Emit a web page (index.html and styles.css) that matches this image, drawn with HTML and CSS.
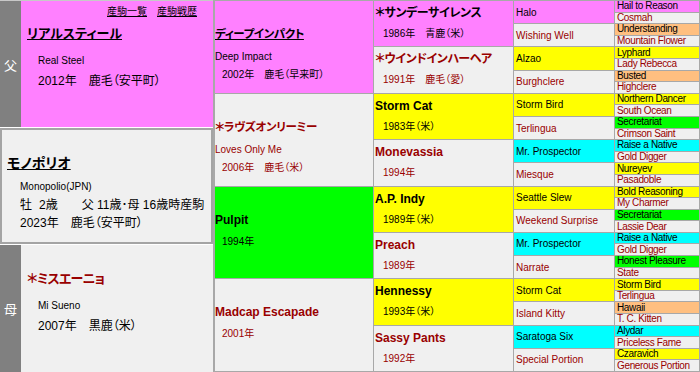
FILE: index.html
```html
<!DOCTYPE html>
<html lang="ja">
<head>
<meta charset="utf-8">
<title>モノポリオ 血統表</title>
<link rel="stylesheet" href="styles.css">
</head>
<body>
<div class="page">
  <div class="left">
    <div class="parent sire">
      <div class="side">父</div>
      <div class="pbody pink">
        <div class="links"><a href="#">産駒一覧</a><a href="#">産駒戦歴</a></div>
        <div class="pname"><a href="#">リアルスティール</a></div>
        <div class="pen">Real Steel</div>
        <div class="pinfo">2012年　鹿毛（安平町）</div>
      </div>
    </div>
    <div class="self">
      <div class="sname">モノポリオ</div>
      <div class="sen">Monopolio(JPN)</div>
      <div class="sline"><span>牡</span><span class="gap1">2歳</span><span class="gap2">父 11歳･母 16歳時産駒</span></div>
      <div class="sline2">2023年　鹿毛（安平町）</div>
    </div>
    <div class="parent dam">
      <div class="side">母</div>
      <div class="pbody">
        <div class="pname fem">＊ミスエーニョ</div>
        <div class="pen">Mi Sueno</div>
        <div class="pinfo">2007年　黒鹿（米）</div>
      </div>
    </div>
  </div>

  <div class="ped">
    <div class="c g1 pink"><div class="n1 jp"><a href="#">ディープインパクト</a></div><div class="e1">Deep Impact</div><div class="y1">2002年　鹿毛（早来町）</div></div>
    <div class="c g1 f"><div class="n1 jp">＊ラヴズオンリーミー</div><div class="e1">Loves Only Me</div><div class="y1">2006年　鹿毛（米）</div></div>
    <div class="c g1 green"><div class="n1">Pulpit</div><div class="y1 ny">1994年</div></div>
    <div class="c g1 f"><div class="n1">Madcap Escapade</div><div class="y1 ny">2001年</div></div>

    <div class="c g2 pink"><div class="n2 jp">＊サンデーサイレンス</div><div class="y2">1986年　青鹿（米）</div></div>
    <div class="c g2 f"><div class="n2 jp">＊ウインドインハーヘア</div><div class="y2">1991年　鹿毛（愛）</div></div>
    <div class="c g2 yellow"><div class="n2">Storm Cat</div><div class="y2">1983年（米）</div></div>
    <div class="c g2 f"><div class="n2">Monevassia</div><div class="y2">1994年</div></div>
    <div class="c g2 yellow"><div class="n2">A.P. Indy</div><div class="y2">1989年（米）</div></div>
    <div class="c g2 f"><div class="n2">Preach</div><div class="y2">1989年</div></div>
    <div class="c g2 yellow"><div class="n2">Hennessy</div><div class="y2">1993年（米）</div></div>
    <div class="c g2 f"><div class="n2">Sassy Pants</div><div class="y2">1992年</div></div>

    <div class="c g3 pink">Halo</div>
    <div class="c g3 f">Wishing Well</div>
    <div class="c g3 yellow">Alzao</div>
    <div class="c g3 f">Burghclere</div>
    <div class="c g3 yellow">Storm Bird</div>
    <div class="c g3 f">Terlingua</div>
    <div class="c g3 cyan">Mr. Prospector</div>
    <div class="c g3 f">Miesque</div>
    <div class="c g3 yellow">Seattle Slew</div>
    <div class="c g3 f">Weekend Surprise</div>
    <div class="c g3 cyan">Mr. Prospector</div>
    <div class="c g3 f">Narrate</div>
    <div class="c g3 yellow">Storm Cat</div>
    <div class="c g3 f">Island Kitty</div>
    <div class="c g3 cyan">Saratoga Six</div>
    <div class="c g3 f">Special Portion</div>

    <div class="c g4 pink">Hail to Reason</div>
    <div class="c g4 f">Cosmah</div>
    <div class="c g4 orange">Understanding</div>
    <div class="c g4 f">Mountain Flower</div>
    <div class="c g4 yellow">Lyphard</div>
    <div class="c g4 f">Lady Rebecca</div>
    <div class="c g4 orange">Busted</div>
    <div class="c g4 f">Highclere</div>
    <div class="c g4 yellow">Northern Dancer</div>
    <div class="c g4 f">South Ocean</div>
    <div class="c g4 green">Secretariat</div>
    <div class="c g4 f">Crimson Saint</div>
    <div class="c g4 cyan">Raise a Native</div>
    <div class="c g4 f">Gold Digger</div>
    <div class="c g4 yellow">Nureyev</div>
    <div class="c g4 f">Pasadoble</div>
    <div class="c g4 yellow">Bold Reasoning</div>
    <div class="c g4 f">My Charmer</div>
    <div class="c g4 green">Secretariat</div>
    <div class="c g4 f">Lassie Dear</div>
    <div class="c g4 cyan">Raise a Native</div>
    <div class="c g4 f">Gold Digger</div>
    <div class="c g4 green">Honest Pleasure</div>
    <div class="c g4 f">State</div>
    <div class="c g4 yellow">Storm Bird</div>
    <div class="c g4 f">Terlingua</div>
    <div class="c g4 orange">Hawaii</div>
    <div class="c g4 f">T. C. Kitten</div>
    <div class="c g4 cyan">Alydar</div>
    <div class="c g4 f">Priceless Fame</div>
    <div class="c g4 yellow">Czaravich</div>
    <div class="c g4 f">Generous Portion</div>
  </div>
</div>
</body>
</html>
```

FILE: styles.css
```css
html, body {
  margin: 0;
  padding: 0;
  background: #ffffff;
}
body {
  font-family: "Liberation Sans", "Noto Sans CJK JP", sans-serif;
  font-feature-settings: "palt";
  color: #000;
}
a {
  color: #000;
  text-decoration: underline;
}
.page {
  display: flex;
  width: 700px;
  height: 372px;
  overflow: hidden;
}

/* ---------- left column ---------- */
.left {
  width: 213px;
  flex: none;
  display: flex;
  flex-direction: column;
  gap: 1px;
}
.parent {
  display: flex;
  height: 127px;
  flex: none;
}
.sire {
  border-top: 1px solid #c8c8c8;
  box-sizing: border-box;
}
.side {
  width: 21px;
  flex: none;
  background: #808080;
  color: #fff;
  font-size: 13px;
  display: flex;
  align-items: center;
  justify-content: center;
}
.pbody {
  flex: 1;
  background: #f0f0f0;
}
.links {
  margin-top: 5px;
  display: flex;
  justify-content: flex-end;
  gap: 10px;
  padding-right: 16px;
  font-size: 10px;
  line-height: 12px;
}
.pname {
  margin-top: 8px;
  padding-left: 6px;
  font-size: 13px;
  font-weight: bold;
  line-height: 16px;
}
.dam .pname {
  margin-top: 26px;
  letter-spacing: -0.8px;
}
.pen {
  margin-top: 13px;
  padding-left: 17px;
  font-size: 10px;
  line-height: 12px;
}
.pinfo {
  margin-top: 6px;
  padding-left: 17px;
  font-size: 12px;
  line-height: 16px;
}
.fem {
  color: #990000;
}

.self {
  height: 116px;
  flex: none;
  box-sizing: border-box;
  border: 2px solid #a4a4a4;
  background: #f0f0f0;
}
.sname {
  margin-top: 25px;
  padding-left: 5px;
  font-size: 14px;
  font-weight: bold;
  line-height: 16px;
  text-decoration: underline;
}
.sen {
  margin-top: 10px;
  padding-left: 18px;
  font-size: 10px;
  line-height: 12px;
}
.sline {
  margin-top: 4px;
  padding-left: 18px;
  font-size: 12px;
  line-height: 16px;
}
.gap1 { margin-left: 7px; }
.gap2 { margin-left: 24px; }
.sline2 {
  margin-top: 2px;
  padding-left: 18px;
  font-size: 12px;
  line-height: 16px;
}

/* ---------- pedigree grid ---------- */
.ped {
  width: 487px;
  height: 372px;
  box-sizing: border-box;
  border: 1px solid #a8a8a8;
  border-left: 2px solid #a8a8a8;
  background: #a8a8a8;
  display: grid;
  grid-template-columns: 158px 139px 100px 1fr;
  grid-template-rows: repeat(32, 1fr);
  grid-auto-flow: dense;
  gap: 1px;
}
.c {
  background: #f0f0f0;
  overflow: hidden;
  min-height: 0;
  color: #000;
}
.c.f { color: #990000; }
.pink { background: #ff80ff; }
.yellow { background: #ffff00; }
.green { background: #00ff00; }
.cyan { background: #00ffff; }
.orange { background: #ffbf80; }

.g1 { grid-column: 1; grid-row: span 8; padding: 25px 0 0 0; }
.g2 { grid-column: 2; grid-row: span 4; padding: 5px 0 0 1px; }
.g3 {
  grid-column: 3;
  grid-row: span 2;
  display: flex;
  align-items: center;
  padding-left: 2px;
  font-size: 10px;
}
.g4 {
  grid-column: 4;
  grid-row: span 1;
  display: flex;
  align-items: center;
  padding-left: 2px;
  font-size: 10px;
  line-height: 10px;
  letter-spacing: -0.35px;
  white-space: nowrap;
}
.n1 {
  font-size: 12px;
  font-weight: bold;
  line-height: 16px;
}
.jp {
  font-size: 11.5px;
  letter-spacing: -0.4px;
}
.e1 {
  margin-top: 9px;
  font-size: 10px;
  line-height: 12px;
}
.y1 {
  margin-top: 5px;
  padding-left: 7px;
  font-size: 10px;
  line-height: 14px;
}
.y1.ny { margin-top: 7px; }
.n2 {
  font-size: 12px;
  font-weight: bold;
  line-height: 14px;
}
.y2 {
  margin-top: 7px;
  padding-left: 8px;
  font-size: 10px;
  line-height: 14px;
}
```
